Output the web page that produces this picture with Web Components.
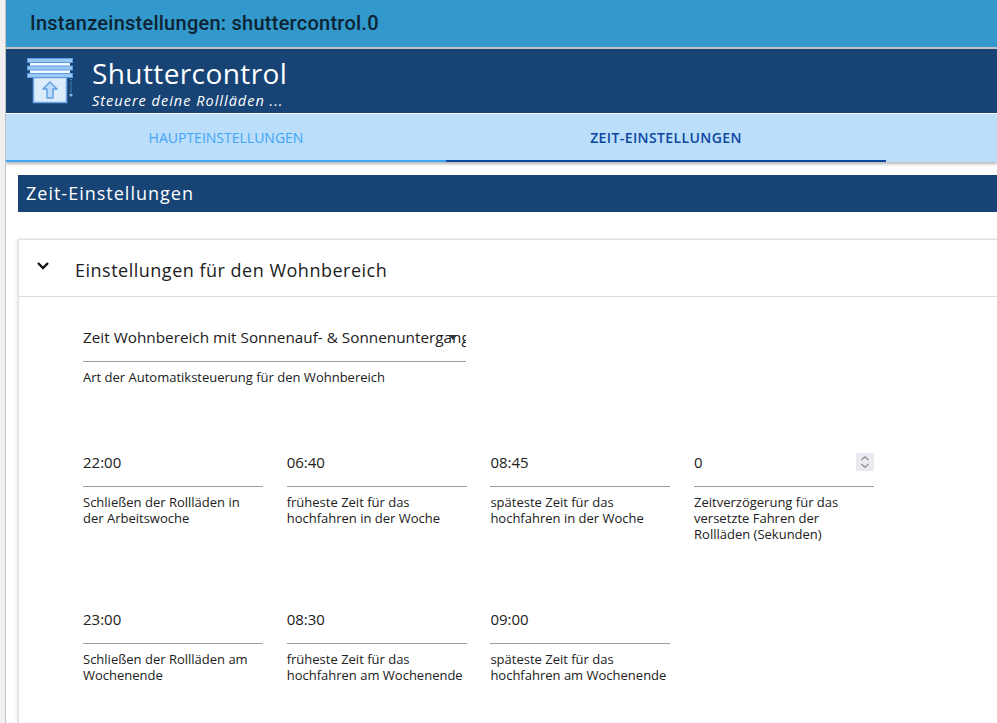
<!DOCTYPE html>
<html lang="de">
<head>
<meta charset="utf-8">
<title>Shuttercontrol</title>
<style>
  html, body { margin: 0; height: 100%; background: #fff; overflow: hidden; }
  body { font-family: "Open Sans", "Noto Sans", sans-serif; }
</style>
</head>
<body>
<settings-page>
  <title-bar slot="title">Instanzeinstellungen: shuttercontrol.0</title-bar>
  <brand-header slot="brand" name="Shuttercontrol" tagline="Steuere deine Rollläden ..."></brand-header>
  <tab-bar slot="tabs">
    <tab-item>HAUPTEINSTELLUNGEN</tab-item>
    <tab-item active>ZEIT-EINSTELLUNGEN</tab-item>
  </tab-bar>
  <section-bar>Zeit-Einstellungen</section-bar>
  <collapse-card heading="Einstellungen für den Wohnbereich">
    <select-field value="Zeit Wohnbereich mit Sonnenauf- &amp; Sonnenuntergang" label="Art der Automatiksteuerung für den Wohnbereich"></select-field>
    <field-grid>
      <time-field value="22:00" label="Schließen der Rollläden in der Arbeitswoche"></time-field>
      <time-field value="06:40" label="früheste Zeit für das hochfahren in der Woche"></time-field>
      <time-field value="08:45" label="späteste Zeit für das hochfahren in der Woche"></time-field>
      <time-field value="0" spinner label="Zeitverzögerung für das versetzte Fahren der Rollläden (Sekunden)"></time-field>
      <time-field value="23:00" label="Schließen der Rollläden am Wochenende"></time-field>
      <time-field value="08:30" label="früheste Zeit für das hochfahren am Wochenende"></time-field>
      <time-field value="09:00" label="späteste Zeit für das hochfahren am Wochenende"></time-field>
    </field-grid>
  </collapse-card>
</settings-page>

<script>
class SettingsPage extends HTMLElement {
  constructor() {
    super();
    this.attachShadow({ mode: "open" });
    this.shadowRoot.innerHTML = `
      <style>
        :host {
          display: block;
          height: 723px;
          overflow: hidden;
          padding-left: 5px;
          background: #f0f0f0;
          box-sizing: border-box;
        }
        .frame {
          height: 100%;
          background: #fff;
          border-left: 1px solid #c4c4c4;
          overflow: hidden;
        }
        .head {
          box-shadow: 0 2px 3px rgba(0, 0, 0, 0.3);
          position: relative;
        }
        .body { padding: 13px 0 0 12px; }
      </style>
      <div class="frame">
        <div class="head">
          <slot name="title"></slot>
          <slot name="brand"></slot>
          <slot name="tabs"></slot>
        </div>
        <div class="body"><slot></slot></div>
      </div>
    `;
  }
}

class TitleBar extends HTMLElement {
  constructor() {
    super();
    this.attachShadow({ mode: "open" });
    this.shadowRoot.innerHTML = `
      <style>
        :host {
          display: flex;
          align-items: center;
          height: 45px;
          padding: 0 0 2px 24px;
          background: #3399cc;
          border-bottom: 2px solid #c2c2c2;
          color: #0c2433;
          font: 500 20px/1 Roboto, sans-serif;
          letter-spacing: 0.25px;
        }
      </style>
      <slot></slot>
    `;
  }
}

class BrandHeader extends HTMLElement {
  constructor() {
    super();
    this.attachShadow({ mode: "open" });
    this.shadowRoot.innerHTML = `
      <style>
        :host {
          display: flex;
          height: 64px;
          background: #174475;
          border-bottom: 1px solid #fff;
          color: #fff;
          overflow: hidden;
        }
        svg { flex: none; margin: 8px 0 0 21px; }
        .text { margin-left: 17px; }
        .name {
          font-size: 28px;
          line-height: 36px;
          margin-top: 6px;
          letter-spacing: 0.4px;
        }
        .tag {
          font-size: 14.5px;
          line-height: 18px;
          font-style: italic;
          letter-spacing: 1px;
          margin-top: 1px;
        }
      </style>
      <svg width="48" height="48" viewBox="0 0 48 48">
        <rect x="3" y="6" width="40" height="3" fill="#f2f8ff"/>
        <rect x="3" y="13" width="40" height="4" fill="#f2f8ff"/>
        <rect x="6.5" y="20.5" width="33" height="25" fill="#dcecfd" stroke="#6fa8e4" stroke-width="1.5"/>
        <g fill="#9cc8f5" stroke="#5d9ce0">
          <rect x="0.5" y="1.5" width="45" height="4"/>
          <rect x="0.5" y="9" width="45" height="4"/>
          <rect x="0.5" y="16.5" width="45" height="4"/>
        </g>
        <path d="M23 25l-7 7h4v9h6v-9h4z" fill="#bcdcfb" stroke="#5d9ce0" stroke-width="1.4" stroke-linejoin="round"/>
        <path d="M44 22v14" stroke="#6fa8e4" stroke-width="1.2" stroke-dasharray="1 1.4"/>
        <circle cx="44" cy="38" r="1.6" fill="#7fb3ea"/>
      </svg>
      <div class="text">
        <div class="name">${this.getAttribute("name")}</div>
        <div class="tag">${this.getAttribute("tagline")}</div>
      </div>
    `;
  }
}

class TabBar extends HTMLElement {
  constructor() {
    super();
    this.attachShadow({ mode: "open" });
    this.shadowRoot.innerHTML = `
      <style>
        :host {
          display: flex;
          height: 48px;
          background: #bbdefb;
        }
      </style>
      <slot></slot>
    `;
  }
}

class TabItem extends HTMLElement {
  constructor() {
    super();
    this.attachShadow({ mode: "open" });
    this.shadowRoot.innerHTML = `
      <style>
        :host {
          display: flex;
          align-items: center;
          justify-content: center;
          width: 440px;
          box-sizing: border-box;
          border-bottom: 2px solid #42a5f5;
          color: #42a5f5;
          font-size: 14px;
          padding-top: 1px;
        }
        :host([active]) {
          border-bottom-color: #0d47a1;
          color: #0d47a1;
          font-weight: 600;
          letter-spacing: 0.4px;
        }
      </style>
      <slot></slot>
    `;
  }
}

class SectionBar extends HTMLElement {
  constructor() {
    super();
    this.attachShadow({ mode: "open" });
    this.shadowRoot.innerHTML = `
      <style>
        :host {
          display: flex;
          align-items: center;
          height: 36px;
          padding: 0 0 1px 8px;
          background: #174475;
          color: #fff;
          font-size: 18px;
          letter-spacing: 1px;
        }
      </style>
      <slot></slot>
    `;
  }
}

class CollapseCard extends HTMLElement {
  constructor() {
    super();
    this.attachShadow({ mode: "open" });
    this.shadowRoot.innerHTML = `
      <style>
        :host {
          display: block;
          margin-top: 27px;
          background: #fff;
          border: 1px solid #e0e0e0;
          border-right: 0;
          box-shadow: 0 1px 4px rgba(0, 0, 0, 0.2);
        }
        header {
          display: flex;
          align-items: center;
          height: 56px;
          border-bottom: 1px solid #ddd;
          color: #212121;
          font-size: 18px;
          letter-spacing: 0.5px;
        }
        svg { flex: none; margin: -4px 0 0 16px; }
        h2 { font: inherit; margin: 4px 0 0 24px; }
        .content { padding: 29px 0 0 64px; }
      </style>
      <header>
        <svg width="16" height="16" viewBox="0 0 16 16">
          <path d="M3 5l5 5 5-5" fill="none" stroke="#111" stroke-width="2.4"/>
        </svg>
        <h2>${this.getAttribute("heading")}</h2>
      </header>
      <div class="content"><slot></slot></div>
    `;
  }
}

class SelectField extends HTMLElement {
  constructor() {
    super();
    this.attachShadow({ mode: "open" });
    this.shadowRoot.innerHTML = `
      <style>
        :host {
          display: block;
          width: 383px;
          color: #212121;
        }
        .box {
          position: relative;
          height: 35px;
          border-bottom: 1px solid #9e9e9e;
          font-size: 15.3px;
          line-height: 22px;
          white-space: nowrap;
          overflow: hidden;
        }
        .arrow {
          position: absolute;
          right: 9px;
          top: 9px;
          border: 4px solid transparent;
          border-top: 5px solid #333;
          border-bottom: 0;
        }
        .label {
          margin-top: 7px;
          font-size: 13px;
          line-height: 16px;
        }
      </style>
      <div class="box">${this.getAttribute("value")}<span class="arrow"></span></div>
      <div class="label">${this.getAttribute("label")}</div>
    `;
  }
}

class FieldGrid extends HTMLElement {
  constructor() {
    super();
    this.attachShadow({ mode: "open" });
    this.shadowRoot.innerHTML = `
      <style>
        :host {
          display: grid;
          grid-template-columns: repeat(4, 180px);
          grid-auto-rows: 157px;
          column-gap: 23.7px;
          margin-top: 60px;
        }
      </style>
      <slot></slot>
    `;
  }
}

class TimeField extends HTMLElement {
  constructor() {
    super();
    this.attachShadow({ mode: "open" });
    const spinner = this.hasAttribute("spinner")
      ? `<svg class="spin" width="18" height="18" viewBox="0 0 18 18">
           <rect width="18" height="18" fill="#e9e9ef"/>
           <path d="M5.5 7L9 3.8 12.5 7M5.5 11L9 14.2 12.5 11" fill="none" stroke="#8a8a8a" stroke-width="1.1"/>
         </svg>`
      : "";
    this.shadowRoot.innerHTML = `
      <style>
        :host {
          display: block;
          color: #212121;
        }
        .box {
          display: flex;
          align-items: center;
          justify-content: space-between;
          height: 33px;
          border-bottom: 1px solid #9e9e9e;
          font-size: 15px;
          padding-bottom: 8px;
        }
        .spin { flex: none; }
        .label {
          margin-top: 7px;
          font-size: 13px;
          line-height: 16px;
        }
      </style>
      <div class="box"><span>${this.getAttribute("value")}</span>${spinner}</div>
      <div class="label">${this.getAttribute("label")}</div>
    `;
  }
}

customElements.define("settings-page", SettingsPage);
customElements.define("title-bar", TitleBar);
customElements.define("brand-header", BrandHeader);
customElements.define("tab-bar", TabBar);
customElements.define("tab-item", TabItem);
customElements.define("section-bar", SectionBar);
customElements.define("collapse-card", CollapseCard);
customElements.define("select-field", SelectField);
customElements.define("field-grid", FieldGrid);
customElements.define("time-field", TimeField);
</script>
</body>
</html>
